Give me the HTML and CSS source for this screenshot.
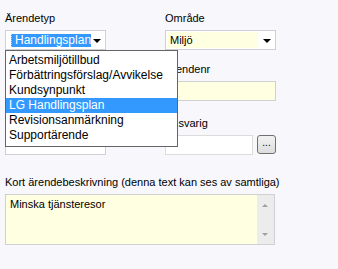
FILE: index.html
```html
<!DOCTYPE html>
<html lang="sv">
<head>
<meta charset="utf-8">
<link rel="stylesheet" href="styles.css">
</head>
<body>
<div class="form">
  <div class="field row1">
    <div class="label">Ärendetyp</div>
    <div class="select sel-type">
      <span class="sel-text"><span class="hl">Handlingsplan</span></span>
      <span class="arrow"></span>
    </div>
  </div>
  <div class="field row1">
    <div class="label">Område</div>
    <div class="select sel-area">
      <span class="sel-text yellow">Miljö</span>
      <span class="arrow"></span>
    </div>
  </div>

  <div class="field row2">
    <div class="label">&nbsp;</div>
    <div class="input"></div>
  </div>
  <div class="field row2">
    <div class="label">Ärendenr</div>
    <div class="input yellow"></div>
  </div>

  <div class="field row3">
    <div class="label">&nbsp;</div>
    <div class="input"></div>
  </div>
  <div class="field row3">
    <div class="label">Ansvarig</div>
    <div class="input-row">
      <div class="input white"></div>
      <div class="btn">...</div>
    </div>
  </div>

  <div class="field full row4">
    <div class="label">Kort ärendebeskrivning (denna text kan ses av samtliga)</div>
    <div class="textarea">
      <div class="ta-text">Minska tjänsteresor</div>
      <div class="scrollbar">
        <span class="sb-up"></span>
        <span class="sb-down"></span>
      </div>
    </div>
  </div>

  <ul class="dropdown">
    <li>Arbetsmiljötillbud</li>
    <li>Förbättringsförslag/Avvikelse</li>
    <li>Kundsynpunkt</li>
    <li class="active">LG Handlingsplan</li>
    <li>Revisionsanmärkning</li>
    <li>Supportärende</li>
  </ul>
</div>
</body>
</html>
```

FILE: styles.css
```css
html, body {
  margin: 0;
  padding: 0;
  background: #f7f7fc;
}
body {
  width: 338px;
  height: 269px;
  overflow: hidden;
  font-family: "Liberation Sans", Arial, sans-serif;
  font-size: 11px;
  color: #000;
}
.form {
  position: relative;
  display: grid;
  grid-template-columns: 101px 111px;
  column-gap: 59px;
  padding: 12px 0 0 5px;
}
.field {
  display: flex;
  flex-direction: column;
  gap: 5px;
}
.row2 { margin-top: 13px; }
.row3 { margin-top: 16px; }
.row4 { margin-top: 21px; }
.full { grid-column: 1 / span 2; }
.label {
  height: 13px;
  line-height: 13px;
  white-space: nowrap;
}
.select {
  box-sizing: border-box;
  height: 20px;
  border: 1px solid #cfd0d4;
  background: #fff;
  display: flex;
  align-items: center;
  position: relative;
}
.sel-type .sel-text {
  margin-left: 5px;
  font-size: 12px;
  overflow: hidden;
  white-space: nowrap;
}
.hl {
  display: inline-block;
  background: #3399ff;
  color: #fff;
  height: 13px;
  line-height: 13px;
  padding: 0 0 0 3px;
  border-left: 1px dotted #9fcfff;
}
.sel-area .sel-text {
  align-self: stretch;
  margin: 1px;
  width: 88px;
  padding-left: 3px;
  line-height: 16px;
}
.yellow { background: #ffffe1; }
.arrow {
  position: absolute;
  right: 4px;
  top: 8px;
  width: 0;
  height: 0;
  border-left: 4px solid transparent;
  border-right: 4px solid transparent;
  border-top: 4px solid #000;
}
.input {
  box-sizing: border-box;
  height: 20px;
  border: 1px solid #cfd0d4;
  background: #fff;
}
.input.yellow { background: #ffffe1; }
.input-row {
  display: flex;
  gap: 4px;
  align-items: flex-start;
}
.input-row .input {
  width: 88px;
  border-color: #dcdcdc;
}
.btn {
  box-sizing: border-box;
  width: 19px;
  height: 19px;
  border: 1px solid #707070;
  border-radius: 3px;
  background: linear-gradient(#f2f2f2, #dddddd);
  font-size: 10px;
  line-height: 14px;
  text-align: center;
  color: #000;
}
.textarea {
  box-sizing: border-box;
  width: 270px;
  height: 51px;
  border: 1px solid #cfd0d4;
  background: #ffffe1;
  display: flex;
}
.ta-text {
  flex: 1;
  padding: 3px 0 0 4px;
  line-height: 13px;
}
.scrollbar {
  width: 17px;
  background: #ececec;
  position: relative;
}
.sb-up, .sb-down {
  position: absolute;
  left: 5px;
  width: 0;
  height: 0;
  border-left: 3px solid transparent;
  border-right: 3px solid transparent;
}
.sb-up { top: 9px; border-bottom: 3px solid #a0a0a0; }
.sb-down { bottom: 8px; border-top: 3px solid #a0a0a0; }
.dropdown {
  position: absolute;
  left: 5px;
  top: 50px;
  box-sizing: border-box;
  width: 173px;
  height: 97px;
  margin: 0;
  padding: 2px 0 0 0;
  list-style: none;
  background: #fff;
  border: 1px solid #646464;
  font-size: 12px;
}
.dropdown li {
  height: 15px;
  line-height: 15px;
  padding-left: 3px;
  white-space: nowrap;
}
.dropdown li.active {
  background: #3399ff;
  color: #fff;
}
```
